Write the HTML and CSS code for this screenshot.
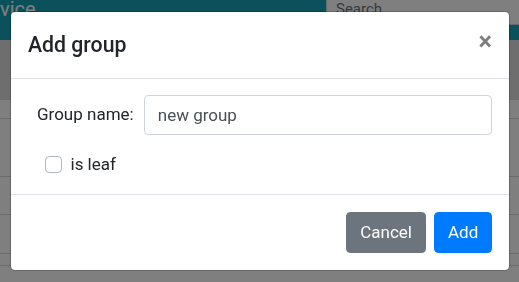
FILE: index.html
```html
<!DOCTYPE html>
<html lang="en">
<head>
  <meta charset="UTF-8">
  <meta name="viewport" content="width=device-width, initial-scale=1.0">
  <title>Groups</title>
  <link rel="stylesheet" href="styles.css">
</head>
<body>
  <nav class="navbar">
    <span class="brand">vice</span>
    <input class="search" type="text" placeholder="Search">
  </nav>

  <div class="page-head"></div>
  <div class="list">
    <div class="list-row row-a"></div>
    <div class="list-row row-b"></div>
    <div class="list-row row-c"></div>
    <div class="list-row row-d"></div>
    <div class="list-row row-e"></div>
  </div>

  <div class="backdrop"></div>

  <div class="modal">
    <div class="modal-header">
      <h5 class="modal-title">Add group</h5>
      <button class="close" type="button">&times;</button>
    </div>
    <div class="modal-body">
      <div class="field">
        <label class="field-label" for="group-name">Group name:</label>
        <input class="form-control" id="group-name" type="text" value="new group">
      </div>
      <label class="check">
        <span class="check-box"></span>
        <span>is leaf</span>
      </label>
    </div>
    <div class="modal-footer">
      <button class="btn btn-secondary" type="button">Cancel</button>
      <button class="btn btn-primary" type="button">Add</button>
    </div>
  </div>
</body>
</html>
```

FILE: styles.css
```css
* {
  box-sizing: border-box;
}
body {
  margin: 0;
  height: 282px;
  overflow: hidden;
  font-family: Roboto, "Liberation Sans", sans-serif;
  font-size: 17px;
  color: #212529;
  background-color: #fff;
}
.navbar {
  height: 40px;
  background-color: #17a2b8;
  display: flex;
  justify-content: space-between;
  align-items: flex-start;
  overflow: hidden;
}
.brand {
  color: #fff;
  font-size: 20px;
  line-height: 26px;
  margin-top: -4px;
}
.search {
  width: 200px;
  height: 33px;
  margin-top: -8px;
  margin-right: -7px;
  padding: 4px 9px;
  font-family: inherit;
  font-size: 15px;
  border: 1px solid #ced4da;
  border-radius: 4px;
  background: #fff;
}
.search::placeholder {
  color: #6c757d;
}
.page-head {
  height: 60px;
  background-color: #dcdcdc;
}
.list-row {
  border-bottom: 1px solid #d6d8db;
}
.row-a { height: 19px; }
.row-b { height: 58px; }
.row-c { height: 38px; }
.row-d { height: 39px; }
.row-e { height: 12px; }

.backdrop {
  position: fixed;
  inset: 0;
  background-color: rgba(0,0,0,0.5);
}
.modal {
  position: fixed;
  top: 11px;
  left: 10px;
  width: 500px;
  background-color: #fff;
  background-clip: padding-box;
  border: 1px solid rgba(0,0,0,0.2);
  border-radius: 5px;
}
.modal-header {
  display: flex;
  align-items: flex-start;
  justify-content: space-between;
  padding: 17px;
  border-bottom: 1px solid #dee2e6;
}
.modal-title {
  margin: 0;
  font-size: 21.25px;
  font-weight: 500;
  line-height: 1.5;
}
.close {
  padding: 17px;
  margin: -17px -17px -17px auto;
  font-family: inherit;
  font-size: 25.5px;
  font-weight: 700;
  line-height: 1;
  color: #000;
  opacity: 0.5;
  text-shadow: 0 1px 0 #fff;
  background: transparent;
  border: 0;
}
.modal-body {
  padding: 16px 17px 17px;
}
.field {
  display: flex;
  align-items: center;
  padding-left: 9px;
}
.field-label {
  line-height: 1.5;
}
.form-control {
  width: 348px;
  height: 40px;
  margin-left: auto;
  padding: 6px 12.75px;
  font-family: inherit;
  font-size: 17px;
  color: #495057;
  border: 1px solid #ced4da;
  border-radius: 4.25px;
  background: #fff;
}
.check {
  display: flex;
  align-items: center;
  gap: 8.5px;
  margin-top: 17px;
  padding-left: 17px;
  line-height: 25.5px;
}
.check-box {
  width: 17px;
  height: 17px;
  border: 1px solid #adb5bd;
  border-radius: 4.25px;
  background: #fff;
}
.modal-footer {
  display: flex;
  justify-content: flex-end;
  align-items: center;
  padding: 12.75px;
  border-top: 1px solid #dee2e6;
}
.btn {
  margin: 4.25px;
  padding: 6.375px 12.75px;
  font-family: inherit;
  font-size: 17px;
  line-height: 1.5;
  color: #fff;
  border: 1px solid transparent;
  border-radius: 4.25px;
}
.btn-secondary {
  background-color: #6c757d;
  border-color: #6c757d;
}
.btn-primary {
  background-color: #007bff;
  border-color: #007bff;
}
```
